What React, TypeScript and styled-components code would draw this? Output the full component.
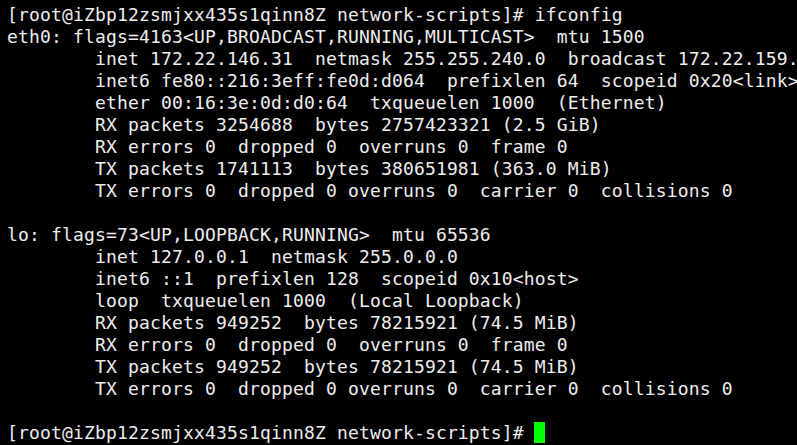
import React from "react";
import styled, { createGlobalStyle } from "styled-components";

const Global = createGlobalStyle`
  html, body { margin: 0; padding: 0; background: #000; }
  body { width: 797px; height: 445px; overflow: hidden; }
`;

const Screen = styled.div`
  width: 797px;
  height: 445px;
  box-sizing: border-box;
  background: #000000;
  padding: 4px 0 0 7px;
  display: flex;
  flex-direction: column;
  overflow: hidden;
`;

const Line = styled.div`
  height: 22px;
  line-height: 22px;
  font-family: "DejaVu Sans Mono", "Liberation Mono", monospace;
  font-size: 18px;
  letter-spacing: 0.16px;
  color: #eeeeee;
  white-space: pre;
`;

const Cursor = styled.span`
  display: inline-block;
  width: 11px;
  height: 21px;
  background: #00ff00;
  vertical-align: top;
  margin-left: -1px;
`;

const lines = [
  "[root@iZbp12zsmjxx435s1qinn8Z network-scripts]# ifconfig",
  "eth0: flags=4163<UP,BROADCAST,RUNNING,MULTICAST>  mtu 1500",
  "        inet 172.22.146.31  netmask 255.255.240.0  broadcast 172.22.159.255",
  "        inet6 fe80::216:3eff:fe0d:d064  prefixlen 64  scopeid 0x20<link>",
  "        ether 00:16:3e:0d:d0:64  txqueuelen 1000  (Ethernet)",
  "        RX packets 3254688  bytes 2757423321 (2.5 GiB)",
  "        RX errors 0  dropped 0  overruns 0  frame 0",
  "        TX packets 1741113  bytes 380651981 (363.0 MiB)",
  "        TX errors 0  dropped 0 overruns 0  carrier 0  collisions 0",
  "",
  "lo: flags=73<UP,LOOPBACK,RUNNING>  mtu 65536",
  "        inet 127.0.0.1  netmask 255.0.0.0",
  "        inet6 ::1  prefixlen 128  scopeid 0x10<host>",
  "        loop  txqueuelen 1000  (Local Loopback)",
  "        RX packets 949252  bytes 78215921 (74.5 MiB)",
  "        RX errors 0  dropped 0  overruns 0  frame 0",
  "        TX packets 949252  bytes 78215921 (74.5 MiB)",
  "        TX errors 0  dropped 0 overruns 0  carrier 0  collisions 0",
  "",
];

export default function App() {
  return (
    <>
      <Global />
      <Screen>
        {lines.map((l, i) => (
          <Line key={i}>{l}</Line>
        ))}
        <Line>
          {"[root@iZbp12zsmjxx435s1qinn8Z network-scripts]# "}
          <Cursor />
        </Line>
      </Screen>
    </>
  );
}
